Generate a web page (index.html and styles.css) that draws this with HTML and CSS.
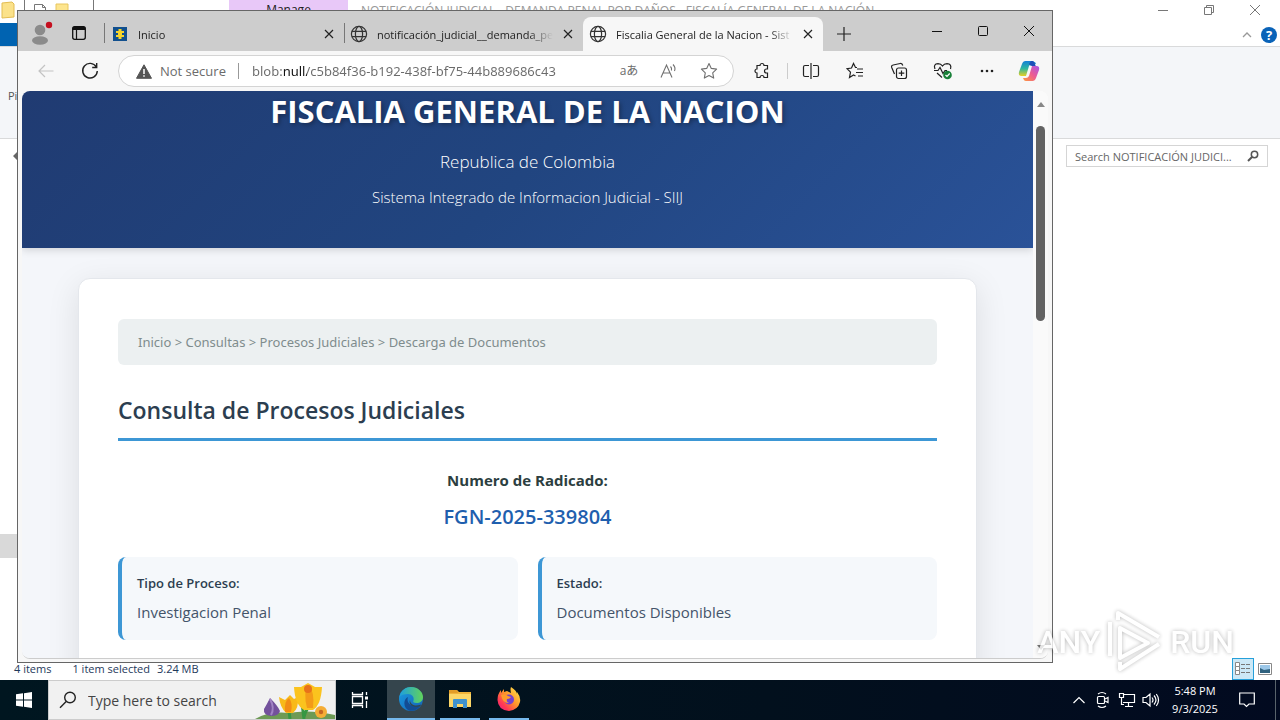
FILE: index.html
```html
<!DOCTYPE html>
<html lang="en">
<head>
<meta charset="utf-8">
<title>Fiscalia General de la Nacion</title>
<link rel="stylesheet" href="styles.css">
</head>
<body>
<svg class="defs" width="0" height="0" aria-hidden="true">
  <symbol id="globe" viewBox="0 0 18 18"><g fill="none" stroke="#333" stroke-width="1.2"><circle cx="9" cy="9" r="7.6"/><ellipse cx="9" cy="9" rx="3.6" ry="7.6"/><path d="M2 6.3h14M2 11.7h14"/></g></symbol>
  <symbol id="cross" viewBox="0 0 10 10"><path d="M1 1l8 8M9 1L1 9" fill="none" stroke="#222" stroke-width="1.2"/></symbol>
</svg>
<div class="desktop">
  <section class="explorer" aria-label="File Explorer">
    <header class="ex-title">
      <div class="ex-quick">
        <svg width="16" height="20" viewBox="0 0 16 20"><path d="M2 3l10-1 2 2v13l-12 1z" fill="#fbe28a" stroke="#e3bd52"/></svg>
        <i class="ex-rule"></i>
        <svg width="14" height="20" viewBox="0 0 14 20"><path d="M1.500 19V4.500h8l3 3V19M9.500 4.500v3h3" fill="#fff" stroke="#777"/></svg>
        <svg width="14" height="20" viewBox="0 0 14 20"><path d="M1 4h12v16H1z" fill="#fde58e" stroke="#e8c65f"/></svg>
        <i class="ex-rule"></i>
      </div>
      <div class="ex-manage">Manage</div>
      <div class="ex-name">NOTIFICACIÓN JUDICIAL - DEMANDA PENAL POR DAÑOS - FISCALÍA GENERAL DE LA NACIÓN</div>
      <div class="ex-controls">
        <button aria-label="Minimize folder"><svg width="12" height="12" viewBox="0 0 12 12"><path d="M1 6.500h10"/></svg></button>
        <button aria-label="Restore folder"><svg width="12" height="12" viewBox="0 0 12 12"><path d="M1.500 3.500h7v7h-7zM3.500 3V1.500h7v7H9"/></svg></button>
        <button aria-label="Close folder"><svg width="12" height="12" viewBox="0 0 12 12"><path d="M1 1l10 10M11 1L1 11"/></svg></button>
      </div>
    </header>
    <div class="ex-tabs">
      <button class="ex-file" aria-label="File"></button>
      <div class="ex-help">
        <svg width="10" height="6" viewBox="0 0 10 6"><path d="M1 5l4-4 4 4" fill="none" stroke="#999" stroke-width="1.300"/></svg>
        <button class="help" aria-label="Help">?</button>
      </div>
    </div>
    <div class="ex-ribbon"><span>Pin to Quick access</span></div>
    <div class="ex-bar">
      <svg class="ex-back" width="14" height="12" viewBox="0 0 14 12"><path d="M1 6l5-5v3h7v4H6v3z" fill="#666"/></svg>
      <label class="ex-search"><input type="search" aria-label="Search folder" value="Search NOTIFICACIÓN JUDICI..."><svg width="12" height="12" viewBox="0 0 12 12"><circle cx="7.500" cy="4.500" r="3.200" fill="none" stroke="#555" stroke-width="1.500"/><path d="M5 7L1 11" stroke="#555" stroke-width="2"/></svg></label>
    </div>
    <div class="ex-body"><div class="ex-thumb"></div></div>
    <footer class="ex-status">
      <span>4 items</span><span>1 item selected</span><span class="size">3.24 MB</span>
      <div class="views">
        <button class="view on" aria-label="Details view"><svg width="16" height="14" viewBox="0 0 16 14"><path d="M.5.500h4v4h-4zM.5 4.500h4v4h-4zM.5 8.500h4v4h-4z" fill="#fff" stroke="#888"/><path d="M6 2.500h4m1 0h4M6 6.500h4m1 0h4M6 10.500h4m1 0h4" stroke="#777"/></svg></button>
        <button class="view" aria-label="Large icons view"><svg width="14" height="12" viewBox="0 0 14 12"><path d="M.5.500h13v11H.5z" fill="#fff" stroke="#888"/><path d="M2 2h10v8H2z" fill="#9cc7e8"/><path d="M2 5l4 2 6-1v4H2z" fill="#2f617e"/></svg></button>
      </div>
    </footer>
  </section>

  <section class="browser" aria-label="Browser">
    <div class="strip">
      <button class="profile" aria-label="Profile"><svg width="24" height="26" viewBox="0 0 24 26"><circle cx="10" cy="10" r="5.300" fill="#8b8b8b"/><ellipse cx="10" cy="20.500" rx="8" ry="4.200" fill="#8b8b8b"/><circle cx="19" cy="5" r="3.200" fill="#c50f1f"/></svg></button>
      <button class="spaces" aria-label="Workspaces"><svg width="16" height="16" viewBox="0 0 16 16"><rect x="1.700" y="1.700" width="12.600" height="12.600" rx="2" fill="none" stroke="#111" stroke-width="1.300"/><path d="M1.500 3.500q0-2 2-2h9q2 0 2 2V5h-13z" fill="#111"/><path d="M5.500 5v9" stroke="#111" stroke-width="1.200"/></svg></button>
      <div class="tab first">
        <svg width="14" height="14" viewBox="0 0 14 14"><path d="M0 0h14v14H0z" fill="#12508e"/><path d="M5.500 2h3v2H11v2H9v2h2v2H8.500v2h-3v-2H3V8h2V6H3V4h2.500z" fill="#f6d42b"/></svg>
        <button class="tab-name">Inicio</button><button class="x" aria-label="Close Inicio"><svg><use href="#cross"/></svg></button>
      </div>
      <div class="tab second">
        <svg width="18" height="18"><use href="#globe"/></svg>
        <button class="tab-name">notificación_judicial__demanda_pe</button><button class="x" aria-label="Close notification"><svg><use href="#cross"/></svg></button>
      </div>
      <div class="tab active">
        <svg width="18" height="18"><use href="#globe"/></svg>
        <button class="tab-name">Fiscalia General de la Nacion - Sist</button><button class="x" aria-label="Close Fiscalia"><svg><use href="#cross"/></svg></button>
      </div>
      <button class="plus" aria-label="New tab"><svg width="14" height="14" viewBox="0 0 14 14"><path d="M7 0v14M0 7h14" stroke="#222" stroke-width="1.200"/></svg></button>
      <div class="win">
        <button aria-label="Minimize"><svg width="10" height="10" viewBox="0 0 10 10"><path d="M0 5.500h10"/></svg></button>
        <button aria-label="Maximize"><svg width="10" height="10" viewBox="0 0 10 10"><rect x=".5" y=".5" width="9" height="9" rx="1"/></svg></button>
        <button aria-label="Close"><svg width="10" height="10" viewBox="0 0 10 10"><path d="M0 0l10 10M10 0L0 10"/></svg></button>
      </div>
    </div>

    <div class="toolbar">
      <button class="nav" aria-label="Back"><svg width="16" height="14" viewBox="0 0 16 14"><path d="M15.500 7H1M7 1L1 7l6 6" fill="none" stroke="#c3c3c3" stroke-width="1.200"/></svg></button>
      <button class="nav" aria-label="Refresh"><svg width="18" height="18" viewBox="0 0 18 18"><path d="M15.300 5A7.300 7.300 0 1 0 16.300 9M15.700 1v4.500h-4.500" fill="none" stroke="#222" stroke-width="1.400"/></svg></button>
      <div class="address">
        <svg width="16" height="15" viewBox="0 0 16 15"><path d="M8 .8l7.500 13.500H.5z" fill="#555" stroke="#555" stroke-linejoin="round"/><path d="M8 5v5M8 11.300v1.500" stroke="#fff" stroke-width="1.500"/></svg>
        <button class="secure">Not secure</button>
        <input class="url" aria-label="Address" value="blob:null/c5b84f36-b192-438f-bf75-44b889686c43">
        <button aria-label="Translate" class="translate">aあ</button>
        <button aria-label="Read aloud"><svg width="18" height="18" viewBox="0 0 18 18" fill="none" stroke="#707070" stroke-width="1.100"><path d="M1 15.500L6.500 3 12 15.500M3 11h7M10.500 4.500q1.500 1.500 1 4M13 2.500q3 3 1.500 6.500"/></svg></button>
        <button aria-label="Favorite"><svg width="18" height="18" viewBox="0 0 18 18"><path d="M9 1.500l2.300 4.900 5.300.7-3.900 3.700 1 5.300L9 13.500l-4.700 2.600 1-5.300-3.900-3.700 5.300-.7z" fill="none" stroke="#707070" stroke-width="1.100" stroke-linejoin="round"/></svg></button>
      </div>
      <div class="tools">
        <button aria-label="Extensions"><svg width="18" height="18" viewBox="0 0 18 18"><path d="M4 3.500h3a2 2 0 0 1 4 0h3.500V7h-1a2 2 0 0 0 0 4h1v4.500H11a2 2 0 0 0-4 0H4V11a2 2 0 1 1 0-4z"/></svg></button>
        <i></i>
        <button aria-label="Split screen"><svg width="18" height="18" viewBox="0 0 18 18"><path d="M7 3.500H3q-1.500 0-1.500 1.500v8q0 1.500 1.500 1.500h4M11 3.500h4q1.500 0 1.500 1.500v8q0 1.500-1.500 1.500h-4M9 1v16"/></svg></button>
        <button aria-label="Favorites"><svg width="18" height="18" viewBox="0 0 18 18"><path d="M11 5.500H9.500L7.500 1.500l-2 4.500-4.500.7 3.500 3.500-1 5.300 4-2.500 2 1M11 7h6M10 10.500h7M12 14h5"/></svg></button>
        <button aria-label="Collections"><svg width="18" height="18" viewBox="0 0 18 18"><rect x="6.500" y="6" width="10" height="10.500" rx="2"/><path d="M4.500 12L1.700 5.500q-.7-2 1.500-2.500l7-1.500q2-.4 2.600 2M11.500 8.500v5.500M8.700 11.200h5.600"/></svg></button>
        <button aria-label="Browser essentials"><svg width="20" height="18" viewBox="0 0 20 18"><path d="M2 7Q0 2 5 1.700q3 0 4.500 2.300Q11 1.700 14 1.700 19 2 17.500 7M1 8.500h4l2-3 3 6 2-3h2M4 11l5 4.500"/><circle cx="14.500" cy="13" r="4.300" fill="#188038" stroke="none"/><path d="M12.500 13l1.500 1.500 2.700-3" stroke="#fff"/></svg></button>
        <button aria-label="More"><svg width="14" height="4" viewBox="0 0 14 4"><g fill="#222" stroke="none"><circle cx="2" cy="2" r="1.300"/><circle cx="7" cy="2" r="1.300"/><circle cx="12" cy="2" r="1.300"/></g></svg></button>
        <button aria-label="Copilot"><svg width="24" height="22" viewBox="0 0 24 22"><defs><linearGradient id="c1" x1="0" y1="0" x2="0" y2="1"><stop offset="0" stop-color="#147fd8"/><stop offset=".5" stop-color="#2eb7a0"/><stop offset="1" stop-color="#e9cf22"/></linearGradient><linearGradient id="c2" x1="1" y1="0" x2="0" y2="1"><stop offset="0" stop-color="#a856e8"/><stop offset=".5" stop-color="#ed5c91"/><stop offset="1" stop-color="#ff9a3c"/></linearGradient></defs><path d="M15 1H8.500Q6 1 5 4L2 12q-1 4 2.500 4H9l3-10q1-2 3-2h4l-.7-1.500Q16.500 1 15 1z" fill="url(#c1)" stroke="none"/><path d="M14 1h1.500Q17 1 18 4l.7 2H15q-2 0-3-2z" fill="#1e4fb8" stroke="none"/><path d="M9 21h6.500q2.500 0 3.500-3l3-8q1-4-2.500-4H15l-3 10q-1 2-3 2H6l.7 1.500Q7.500 21 9 21z" fill="url(#c2)" stroke="none"/></svg></button>
      </div>
    </div>

    <div class="viewport">
      <div class="page">
        <header class="hero">
          <h1>FISCALIA GENERAL DE LA NACION</h1>
          <p class="country">Republica de Colombia</p>
          <p class="system">Sistema Integrado de Informacion Judicial - SIIJ</p>
        </header>
        <main class="card">
          <nav class="crumbs" aria-label="Breadcrumb">Inicio &gt; Consultas &gt; Procesos Judiciales &gt; Descarga de Documentos</nav>
          <h2>Consulta de Procesos Judiciales</h2>
          <div class="case"><strong>Numero de Radicado:</strong><div class="number">FGN-2025-339804</div></div>
          <dl class="facts">
            <div><dt>Tipo de Proceso:</dt><dd>Investigacion Penal</dd></div>
            <div><dt>Estado:</dt><dd>Documentos Disponibles</dd></div>
          </dl>
        </main>
      </div>
      <div class="scroll"><svg width="8" height="6" viewBox="0 0 8 6"><path d="M0 6l4-5 4 5z" fill="#888"/></svg><div class="thumb"></div><svg class="down" width="8" height="6" viewBox="0 0 8 6"><path d="M0 0l4 5 4-5z" fill="#777"/></svg></div>
    </div>
  </section>

  <div class="mark"><span>ANY</span><svg width="58" height="64" viewBox="0 0 58 64"><g fill="none" stroke="#fff" stroke-width="4" stroke-linejoin="round"><path d="M14 18v30l28-15z"/><path d="M4 46V12M12 10V3l41 24M53 34L14 59v-7"/></g></svg><span>RUN</span></div>

  <footer class="taskbar">
    <button class="start" aria-label="Start"><svg width="16" height="16" viewBox="0 0 16 16"><path d="M0 2.300L7 1.300v6.200H0zM8 1.200L16 0v7.500H8zM0 8.500h7v6.200l-7-1zM8 8.500h8V16l-8-1.200z" fill="#fff"/></svg></button>
    <label class="find">
      <svg width="18" height="18" viewBox="0 0 18 18"><circle cx="11" cy="6.500" r="5.300" fill="none" stroke="#222" stroke-width="1.400"/><path d="M7.200 10.500L1 16.700" stroke="#222" stroke-width="1.400"/></svg>
      <input type="text" aria-label="Search Windows" value="Type here to search">
      <svg class="flowers" width="80" height="38" viewBox="0 0 80 38"><path d="M0 38q14-8 34-6 20-4 46 2v4z" fill="#6d9a55"/><path d="M35 38q-1-10-3-14M49 38q-1-8-2-16M49 36q2-9 8-12" fill="none" stroke="#379743" stroke-width="3"/><path d="M15 17q8 8 10 13-1 5-9 5-8-1-7-7 3-5 6-11z" fill="#73519c"/><path d="M15 18q5 9 1 16" fill="none" stroke="#a184c4" stroke-width="2"/><path d="M24 16l6 3 5-5 4 4 4-2q1 11-5 16h-7q-6-6-7-16z" fill="#f8b91a"/><path d="M30 31q-1-11 4-14 4 5 2 14z" fill="#f18c16"/><path d="M39 6l7 0 7-4 7 4 7 0q-1 18-9 23h-9q-9-5-10-23z" fill="#fbc31e"/><path d="M52 27q-4-16 1-23 7 6 5 23z" fill="#f39b18"/><circle cx="53" cy="8" r="4" fill="#e8721a"/><circle cx="66" cy="31" r="6" fill="#f5ad35"/><circle cx="66" cy="31" r="2.200" fill="#c66622"/></svg>
    </label>
    <button class="task-view" aria-label="Task view"><svg width="18" height="18" viewBox="0 0 18 18" fill="none" stroke="#fff" stroke-width="1.300"><path d="M1.500 1v2.500h10V1M1.500 5.500h10v7h-10zM1.500 17v-2.500h10V17M15.500 1v3M15.500 10v7"/><path d="M14 5.500h3v3h-3z" fill="#fff" stroke="none"/></svg></button>
    <button class="app current" aria-label="Edge"><svg width="24" height="24" viewBox="0 0 24 24"><defs><linearGradient id="e1"><stop stop-color="#1d9ee0"/><stop offset="1" stop-color="#62d35a"/></linearGradient><linearGradient id="e2" y2="1"><stop stop-color="#1b9de2"/><stop offset="1" stop-color="#1461b5"/></linearGradient></defs><circle cx="12" cy="12" r="12" fill="url(#e2)"/><path d="M.3 10C2 3 7 0 12 0c7 0 12 5 12 10 0 4-3 6-6.500 6-3 0-4-1-3-2.500C15.500 10 13 7 9 7 5 7 2 8 .3 10z" fill="url(#e1)"/><path d="M9 10c-2 6 3 11 13 8-3 5-8 6.500-12 5.500C4 21 4 12 9 10z" fill="#134c93"/><path d="M11 13c0 5 6 7 11 4.500l-.8 1.800C15 21 9 18 11 13z" fill="#35454a"/></svg></button>
    <button class="app" aria-label="File Explorer"><svg width="22" height="20" viewBox="0 0 22 20"><path d="M0 1h8l2 2h12v15H0z" fill="#f0b33a"/><path d="M0 5h22v13H0z" fill="#fcd667"/><path d="M0 1h8l1 3H0z" fill="#e39d27"/><path d="M4 19v-8q0-1 1-1h12q1 0 1 1v8h-4v-4H8v4z" fill="#3e92cf"/></svg></button>
    <button class="app" aria-label="Firefox"><svg width="24" height="24" viewBox="0 0 24 24"><defs><linearGradient id="f1" x1="1" y1="0" x2="0" y2="1"><stop stop-color="#fff14f"/><stop offset=".45" stop-color="#ff972b"/><stop offset=".75" stop-color="#ff3855"/><stop offset="1" stop-color="#e6178b"/></linearGradient></defs><path d="M14 0q6 4 6 7V5q4 5 3 10-2 8-11 9Q1 23 .5 13 .5 7 4 3v3l3-4v3l3-1 4 2q-1-4 0-6z" fill="url(#f1)"/><circle cx="12" cy="12.500" r="5" fill="#7442cf"/><path d="M4 8q4-2 7 1l3 1q-1 2-4 2-1 3 2 4-6 1-8-8z" fill="#ff9b2c"/></svg></button>
    <div class="tray">
      <button aria-label="Hidden icons"><svg width="14" height="8" viewBox="0 0 14 8"><path d="M1.500 7L7 1.500 12.500 7"/></svg></button>
      <button aria-label="Meet now"><svg width="14" height="18" viewBox="0 0 14 18"><rect x="1.500" y="5.500" width="7" height="7" rx="1"/><path d="M9 8l3-1.500v5L9 10M2 3q4-3 8 0M2 15q4 3 8 0"/></svg></button>
      <button aria-label="Network"><svg width="18" height="16" viewBox="0 0 18 16"><path d="M5 2.500h11.500v8H5M10.500 11v3M7 14.500h8M1.500 1.500h4v4h-4zM3.500 5.500v7H6"/></svg></button>
      <button aria-label="Volume"><svg width="18" height="16" viewBox="0 0 18 16"><path d="M1 5.500h3L8 2v12l-4-3.500H1zM10 5.500q2 2.500 0 5M12 3.500q4 4.500 0 9M14.300 2q4.500 6 0 12"/></svg></button>
      <div class="clock"><span>5:48 PM</span><span>9/3/2025</span></div>
      <button class="notes" aria-label="Notifications"><svg width="16" height="16" viewBox="0 0 16 16"><path d="M.7 1h14.600v11H10l-2.500 2.500L5 12H.7z"/></svg></button>
    </div>
  </footer>
</div>
</body>
</html>
```

FILE: styles.css
```css
* { box-sizing: border-box; }
body { margin: 0; font-family: "Open Sans", "Noto Sans", "Noto Sans CJK JP", sans-serif; font-size: 11px; color: #222; }
button, input { font: inherit; color: inherit; border: 0; padding: 0; background: none; }
button { display: flex; align-items: center; justify-content: center; flex-shrink: 0; }
input { min-width: 0; outline: 0; }
input[type="search"] { appearance: none; }
svg { display: block; flex-shrink: 0; }
.defs { position: absolute; }
.desktop { position: relative; display: flex; flex-direction: column; height: 100vh; overflow: hidden; background: #fff; }

.explorer { flex: 1; min-height: 0; display: flex; flex-direction: column; background: #fff; }
.ex-title { display: flex; height: 23px; }
.ex-quick { display: flex; width: 229px; gap: 8px; }
.ex-rule { width: 1px; height: 15px; background: #777; }
.ex-quick .ex-rule:last-child { margin-left: 16px; }
.ex-manage { width: 119px; background: #e8c8f8; text-align: center; font-size: 12px; line-height: 20px; }
.ex-name { flex: 1; padding-left: 13px; font-size: 12px; line-height: 22px; color: #999; white-space: nowrap; }
.ex-controls { display: flex; padding-right: 2px; }
.ex-controls button { width: 46px; height: 20px; }
.ex-controls svg { fill: none; stroke: #777; }
.ex-tabs { display: flex; justify-content: space-between; height: 24px; border-bottom: 1px solid #d9dadb; }
.ex-file { width: 56px; background: #0063b1; }
.ex-help { display: flex; align-items: center; gap: 9px; padding-right: 3px; }
.help { width: 16px; height: 16px; border-radius: 50%; background: #0a63b8; color: #fff; font-weight: 700; font-size: 13px; line-height: 16px; }
.ex-ribbon { height: 92px; padding: 41px 8px 0; background: #f4f6f9; border-bottom: 1px solid #d9dadb; color: #555; }
.ex-bar { display: flex; align-items: center; justify-content: space-between; height: 34px; padding: 0 12px; }
.ex-search { display: flex; align-items: center; width: 202px; height: 22px; padding: 0 8px; border: 1px solid #d5d5d5; color: #666; background: #fff; }
.ex-search input { flex: 1; }
.ex-body { flex: 1; padding-top: 361px; }
.ex-thumb { width: 56px; height: 24px; background: #d9d9d9; }
.ex-status { display: flex; align-items: center; height: 23px; padding: 0 4px 0 14px; gap: 21px; color: #1e395b; }
.size { margin-left: -14px; }
.views { display: flex; margin-left: auto; }
.view { width: 22px; height: 22px; }
.view.on { border: 1px solid #26a0da; background: #cce8f6; }

.browser { position: absolute; inset: 10px 227px 57px 17px; display: flex; flex-direction: column; border: 1px solid #666; background: #f7f7f7; }
.strip { display: flex; height: 40px; background: #cdcdcd; align-items: center; }
.profile { width: 44px; padding-left: 4px; }
.profile svg { margin-top: 4px; }
.spaces { width: 34px; }
.spaces svg { margin-top: 4px; }
.tab { display: flex; align-items: center; height: 34px; margin-top: 6px; }
.tab .x { width: 22px; height: 22px; margin: 0 4px; }
.x svg { width: 10px; height: 10px; }
.tab-name { flex: 1; min-width: 0; justify-content: flex-start; overflow: hidden; white-space: nowrap; margin-left: 9px; mask-image: linear-gradient(to right, #000 calc(100% - 24px), transparent); }
.first { width: 240px; margin-left: 8px; padding-left: 9px; background: linear-gradient(#777, #777) 0 6px / 1px 20px no-repeat; }
.first .tab-name { margin-left: 11px; }
.second { width: 239px; padding-left: 6px; background: linear-gradient(#777, #777) 0 6px / 1px 20px no-repeat; }
.active { width: 240px; padding-left: 6px; background: #f7f7f7; border-radius: 8px 8px 0 0; }
.plus { width: 42px; height: 34px; margin-top: 6px; }
.win { display: flex; margin-left: auto; }
.win button { width: 46px; height: 40px; }
.win svg { fill: none; stroke: #111; }
.toolbar { display: flex; height: 40px; align-items: center; }
.nav { width: 44px; height: 32px; padding-left: 12px; }
.address { flex: 1; min-width: 0; display: flex; align-items: center; height: 32px; margin-left: 12px; padding: 0 4px 0 17px; border: 1px solid #d4d4d4; border-radius: 16px; background: #fff; color: #6b6b6b; font-size: 13px; }
.secure { margin-left: 8px; padding-right: 12px; border-right: 1px solid #999; line-height: 16px; }
.url { flex: 1; margin-left: 13px; color: transparent; font-family: "Noto Sans", sans-serif; background: linear-gradient(to right, #6b6b6b 32px, #111 32px, #111 55px, #6b6b6b 55px) text; }
.address .translate, .address button:nth-last-child(-n+2) { width: 40px; height: 28px; }
.address .translate { font-size: 12px; padding-bottom: 2px; }
.tools { display: flex; align-items: center; padding-left: 7px; padding-right: 3px; }
.tools button { width: 44px; height: 32px; }
.tools button:last-child { width: 40px; }
.tools svg { fill: none; stroke: #222; stroke-width: 1.2px; }
.tools i { width: 1px; height: 16px; background: #ccc; margin: 0 1px 0 4px; }
.tools button:first-child { width: 42px; }

.viewport { flex: 1; min-height: 0; display: flex; margin: 0 4px 3px; overflow: hidden; border-radius: 8px; border-bottom: 1px solid #ccc; background: #fafafa; }
.page { flex: 1; min-width: 0; overflow: hidden; background: #f4f6fa; color: #2c3e50; }
.hero { padding: 0 20px 40px; text-align: center; color: #fff; background: linear-gradient(135deg, #203b72, #214580 50%, #2a5298); box-shadow: 0 2px 8px rgb(0 0 0 / 15%); }
.hero h1 { margin: 0 0 18px; font-size: 31px; line-height: 40px; font-weight: 700; text-shadow: 2px 2px 4px rgb(0 0 0 / 30%); }
.hero p { margin: 0; font-weight: 300; }
.hero .country { font-size: 17px; line-height: 26px; margin-bottom: 11px; }
.hero .system { font-size: 15px; line-height: 22px; }
.card { margin: 30px 56px 0; padding: 40px 39px; height: 640px; border: 1px solid #e4e7ec; border-radius: 12px; background: #fff; box-shadow: 0 8px 32px rgb(0 0 0 / 10%); }
.crumbs { padding: 12px 20px; line-height: 22px; border-radius: 6px; background: #ecf0f1; color: #7f8c8d; font-family: "Noto Sans", sans-serif; font-size: 13px; }
.card h2 { margin: 29px 0 25px; padding-bottom: 12px; border-bottom: 3px solid #3d97d5; font-size: 23px; line-height: 32px; font-weight: 600; }
.case { text-align: center; color: #2c3e40; font-size: 15px; line-height: 28px; }
.number { margin-top: 8px; color: #1f5fae; font-size: 20px; line-height: 30px; font-weight: 600; }
.facts { display: grid; grid-template-columns: 1fr 1fr; gap: 20px; margin: 25px 0 0; }
.facts div { padding: 15px; border-left: 4px solid #3d97d5; border-radius: 8px; background: #f5f8fb; }
.facts dt { font-size: 13px; line-height: 22px; font-weight: 600; margin-bottom: 5px; }
.facts dd { margin: 0; font-size: 15px; line-height: 26px; color: #44546a; }
.scroll { width: 15px; display: flex; flex-direction: column; align-items: center; padding: 10px 0 7px; background: #fafafa; }
.thumb { width: 9px; height: 195px; margin-top: 19px; border-radius: 5px; background: #636363; }
.down { margin-top: auto; }

.mark { position: absolute; right: 46px; bottom: 46px; display: flex; align-items: center; gap: 6px; color: #fff; font: 500 32px "Roboto", sans-serif; filter: drop-shadow(0 0 2px rgb(0 0 0 / 35%)); pointer-events: none; opacity: .8; }

.taskbar { display: flex; height: 40px; background: linear-gradient(to right, #001620, #02101d 60%, #020a20); color: #fff; }
.start { width: 48px; }
.find { display: flex; align-items: center; width: 288px; padding-left: 10px; overflow: hidden; border: 1px solid #ccc; background: #f1f1f1; color: #444; font-size: 14px; }
.find input { flex: 1; margin-left: 11px; }
.flowers { align-self: flex-end; }
.task-view { width: 48px; }
.app { width: 40px; margin-left: 5px; margin-right: 4px; border-bottom: 2px solid #76b9ed; }
.current { width: 48px; margin: 0; margin-left: 3px; background: #35454d; }
.current + .app { margin-left: 5px; }
.tray { display: flex; align-items: center; margin-left: auto; padding-right: 8px; border-right: 1px solid #59636b; margin-right: 4px; }
.tray button { width: 24px; height: 40px; }
.tray svg { fill: none; stroke: #fff; stroke-width: 1.2px; }
.clock { display: flex; flex-direction: column; align-items: center; width: 64px; line-height: 18px; }
.tray .notes { width: 40px; }
```
